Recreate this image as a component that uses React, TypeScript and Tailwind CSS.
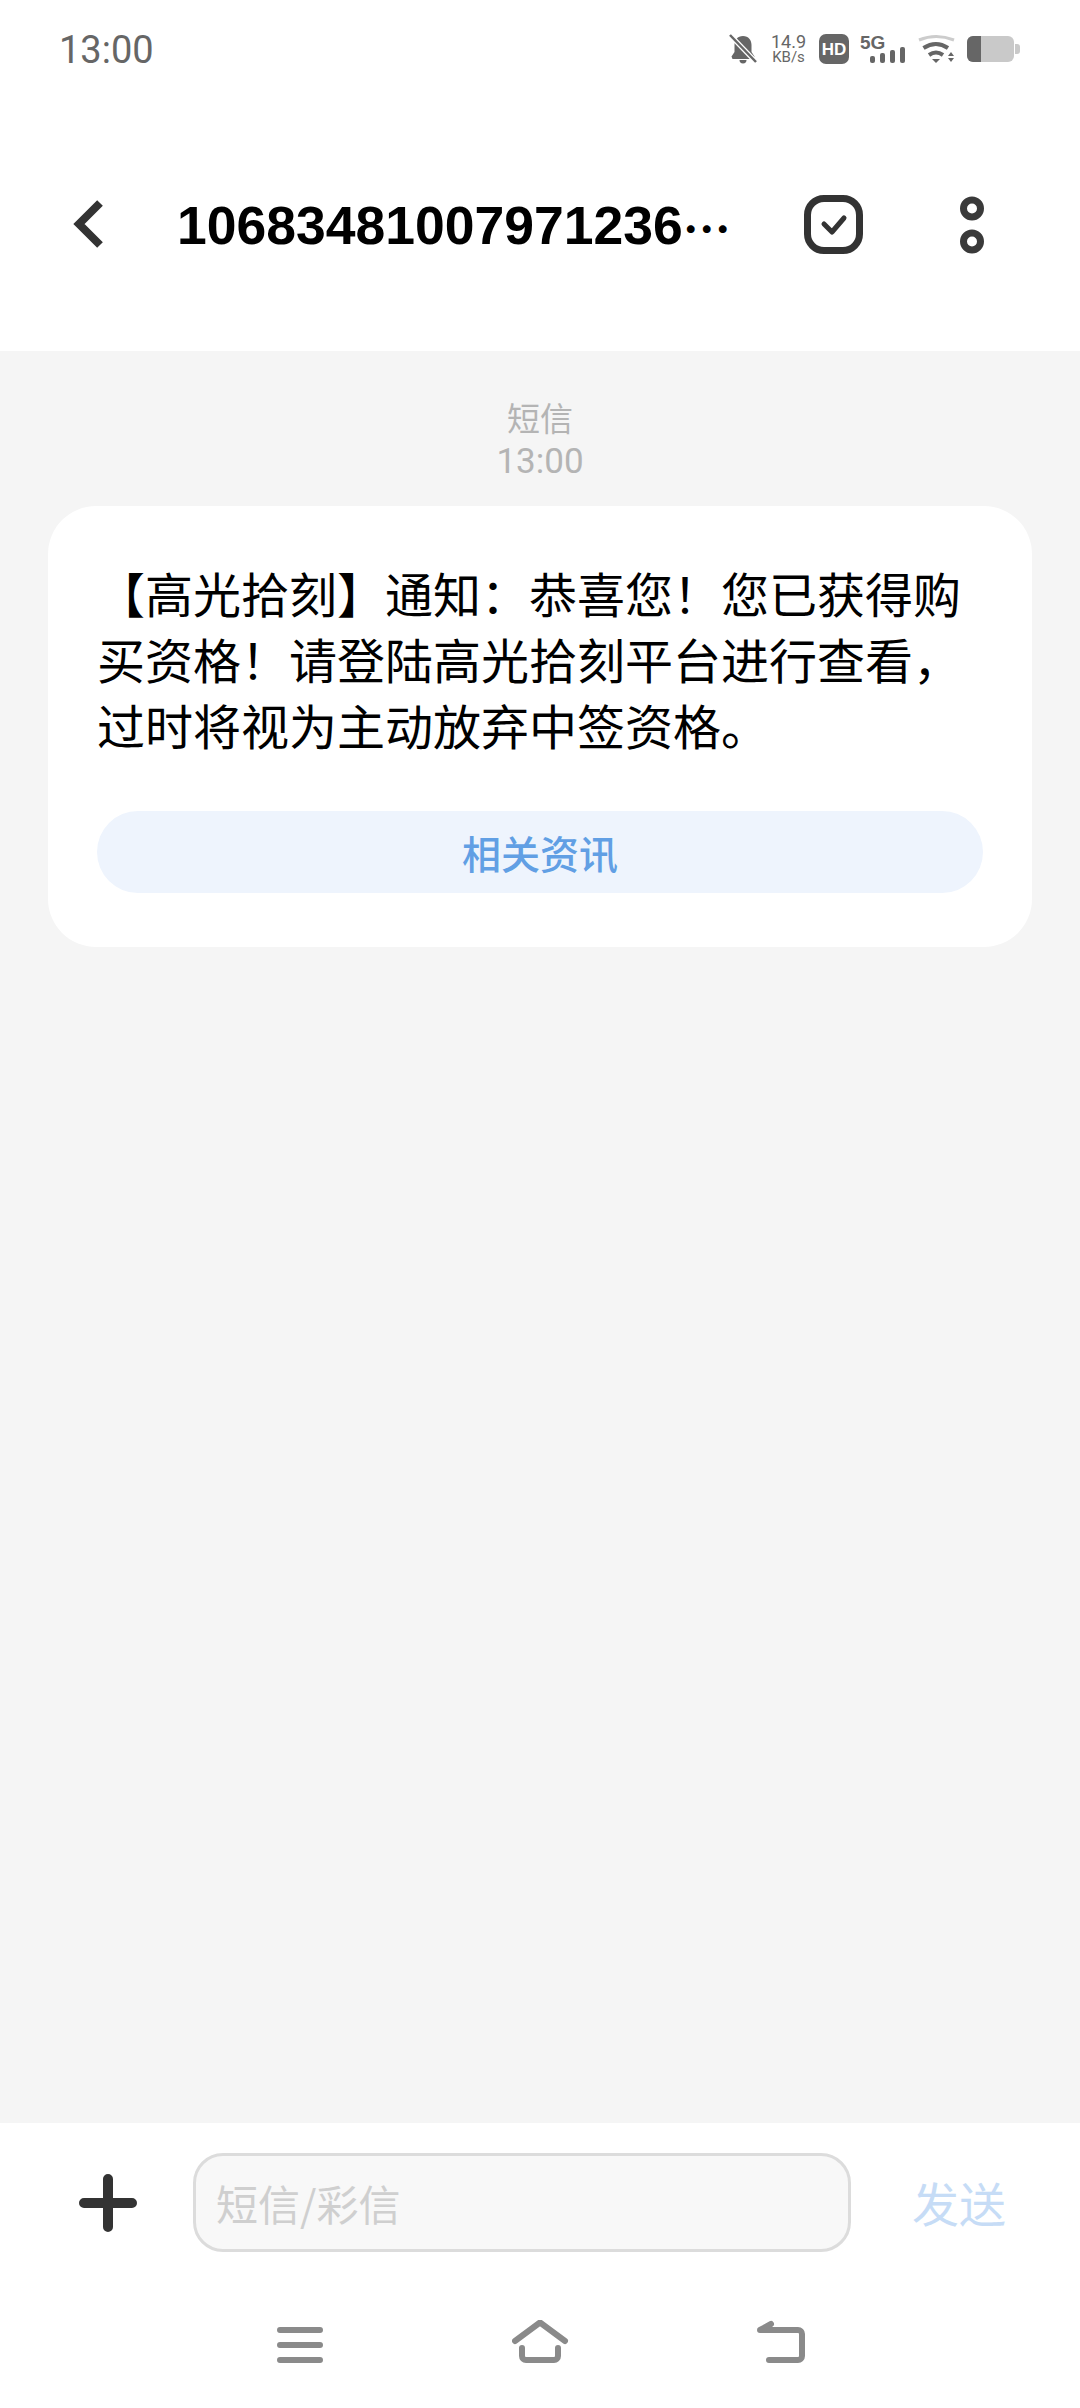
const cjk = 'font-["Noto_Sans_CJK_SC","Noto_Sans",sans-serif]';

function StatusIcons() {
  return (
    <div className="flex items-center">
      {/* muted bell */}
      <svg width="28" height="30" viewBox="0 0 28 30" fill="#666">
        <path d="M14 2c-5.500 0-8.500 4-8.500 9v7L2.500 22.500 3.500 25h21l1-2.500-3-4.500v-7c0-5-3-9-8.500-9z" />
        <path d="M10.500 26h7a3.500 3.500 0 0 1-7 0z" />
        <path d="M1 1l26 27" stroke="#fff" strokeWidth="5" />
        <path d="M1 1l26 27" stroke="#666" strokeWidth="2.500" />
      </svg>
      <div className="ml-[13px] flex w-[37px] flex-col items-center font-['Roboto',sans-serif] text-[#666]">
        <span className="text-[18px] leading-[17px]">14.9</span>
        <span className="text-[15px] leading-[15px]">KB/s</span>
      </div>
      <div className="ml-[12px] flex h-[30px] w-[30px] items-center justify-center rounded-[7px] bg-[#666] font-['Liberation_Sans',sans-serif] text-[17px] leading-none font-bold text-white">
        HD
      </div>
      <svg className="ml-[11px] overflow-visible" width="46" height="30" viewBox="0 0 46 30" fill="#666">
        <text x="0" y="15" fontFamily="Liberation Sans" fontSize="19" fontWeight="700">5G</text>
        <rect x="10" y="22" width="5" height="7" rx="2" />
        <rect x="20" y="19" width="5" height="10" rx="2" />
        <rect x="30" y="16" width="5" height="13" rx="2" />
        <rect x="40" y="13" width="5" height="16" rx="2" />
      </svg>
      <svg className="ml-[12px]" width="38" height="30" viewBox="0 0 38 30" fill="none">
        <path d="M1 6Q18-1 36 6" stroke="#ccc" strokeWidth="3" />
        <path d="M5.500 14Q18 6 30 14" stroke="#666" strokeWidth="4" />
        <path d="M11 21Q18 16 25 21" stroke="#666" strokeWidth="4" />
        <path d="M14 25h8l-4 4z" fill="#666" />
        <path d="M30 22l3-4 3 4z" fill="#666" />
        <path d="M30 24h6l-3 4z" fill="#666" />
      </svg>
      <div className="ml-[11px] flex h-[26px] w-[47px] overflow-hidden rounded-[6px] bg-[#c9c9c9]">
        <div className="w-[14px] bg-[#666]" />
      </div>
      <div className="ml-[1px] h-[10px] w-[5px] rounded-r-[3px] bg-[#c9c9c9]" />
    </div>
  );
}

export default function App() {
  return (
    <div className={`flex h-[2408px] w-[1080px] flex-col bg-white ${cjk}`}>
      {/* status bar */}
      <div className="flex h-[98px] items-center justify-between pr-[60px] pl-[59px]">
        <span className="pt-[2px] font-['Roboto',sans-serif] text-[38px] leading-none text-[#666]">13:00</span>
        <StatusIcons />
      </div>

      {/* header */}
      <div className="flex h-[253px] items-start pt-[98px]">
        <svg className="mt-[4px] ml-[73px]" width="30" height="48" viewBox="0 0 30 48" fill="none">
          <path d="M27 3L6 24l21 21" stroke="#333" strokeWidth="8" />
        </svg>
        <div className="mt-[5px] ml-[74px] flex w-[560px] items-center font-['Liberation_Sans',sans-serif] text-[53.500px] leading-[50px] font-bold whitespace-nowrap text-black">
          10683481007971236
          <span className={`${cjk} text-[48px] leading-[50px]`}>⋯</span>
        </div>
        <div className="mt-[-1px] ml-[67px] flex h-[59px] w-[59px] items-center justify-center rounded-[20px] border-[7px] border-[#333]">
          <svg width="28" height="24" viewBox="0 0 28 24" fill="none">
            <path d="M4 11l8 8L24 5" stroke="#333" strokeWidth="5" strokeLinecap="round" strokeLinejoin="round" />
          </svg>
        </div>
        <svg className="ml-[97px]" width="24" height="58" viewBox="0 0 24 58" fill="none">
          <circle cx="12" cy="12.500" r="8.500" stroke="#3a3a3a" strokeWidth="7" />
          <circle cx="12" cy="45.500" r="8.500" stroke="#3a3a3a" strokeWidth="7" />
        </svg>
      </div>

      {/* conversation */}
      <main className="flex flex-1 flex-col items-center bg-[#f5f5f5] px-[48px] pt-[44px]">
        <div className="text-center text-[#b4b4b4]">
          <div className="text-[33px] leading-[45px]">短信</div>
          <div className="font-['Roboto',sans-serif] text-[35px] leading-[44px]">13:00</div>
        </div>
        <div className="mt-[22px] h-[441px] w-full rounded-[48px] bg-white px-[49px] pt-[53px]">
          <p lang="zh-CN" className="text-[48px] leading-[66px] text-black">
            【高光拾刻】通知：恭喜您！您已获得购买资格！请登陆高光拾刻平台进行查看，过时将视为主动放弃中签资格。
          </p>
          <div className="mt-[54px] flex h-[82px] items-center justify-center rounded-full bg-[#eef4fd] text-[39px] font-medium text-[#619fe4]">
            相关资讯
          </div>
        </div>
      </main>

      {/* compose + nav */}
      <div className="h-[285px] bg-white">
        <div className="flex items-center pt-[30px]">
          <svg className="ml-[79px]" width="58" height="58" viewBox="0 0 58 58" fill="none">
            <path d="M29 5v48M5 29h48" stroke="#333" strokeWidth="10" strokeLinecap="round" />
          </svg>
          <div className="ml-[56px] flex h-[99px] w-[658px] items-center rounded-[30px] border-[3px] border-[#dcdcdc] bg-[#f8f8f8] pl-[20px] text-[42px] text-[#cfcfcf]">
            短信/彩信
          </div>
          <span className="ml-[61px] text-[47px] text-[#c6dcf6]">发送</span>
        </div>
        <div className="mt-[68px] flex items-start">
          <svg className="ml-[277px]" width="46" height="44" viewBox="0 0 46 44" fill="none">
            <path d="M3 10h40M3 25h40M3 40h40" stroke="#8a8a8a" strokeWidth="6" strokeLinecap="round" />
          </svg>
          <svg className="ml-[189px]" width="58" height="44" viewBox="0 0 58 44" fill="none">
            <path d="M3 21L28 2.500 53 21" stroke="#8a8a8a" strokeWidth="6" strokeLinecap="round" strokeLinejoin="round" />
            <path d="M10 28v8a4 4 0 0 0 4 4h28a4 4 0 0 0 4-4v-8" stroke="#8a8a8a" strokeWidth="6" strokeLinecap="round" />
          </svg>
          <svg className="ml-[187px]" width="50" height="44" viewBox="0 0 50 44" fill="none">
            <path d="M12 40h29a4 4 0 0 0 4-4V14a4 4 0 0 0-4-4H3l11-6" stroke="#8a8a8a" strokeWidth="6" strokeLinecap="round" strokeLinejoin="round" />
          </svg>
        </div>
      </div>
    </div>
  );
}
